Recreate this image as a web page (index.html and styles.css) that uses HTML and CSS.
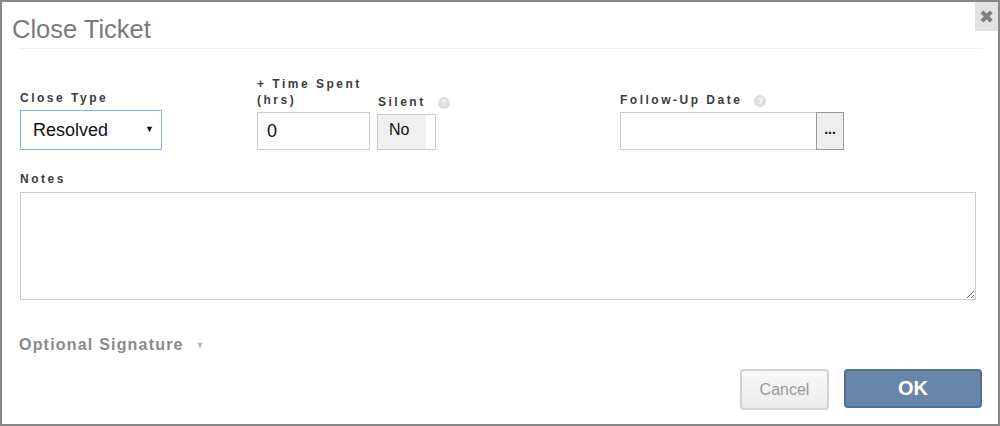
FILE: index.html
```html
<!DOCTYPE html>
<html lang="en">
<head>
    <meta charset="UTF-8">
    <meta name="viewport" content="width=device-width, initial-scale=1.0">
    <title>Close Ticket</title>
    <link rel="stylesheet" href="styles.css">
</head>
<body>

    <div class="dialog">
        <button type="button" class="dialog-close" title="Close">&#10006;</button>

        <h2 class="dialog-title">Close Ticket</h2>
        <div class="dialog-rule"></div>

        <form class="dialog-body" id="closeTicketForm">
            <div class="field-row">
                <div class="field field-type">
                    <label for="closeType">Close Type</label>
                    <div class="select-wrap">
                        <select id="closeType">
                            <option>Resolved</option>
                            <option>Duplicate</option>
                            <option>Cancelled</option>
                        </select>
                    </div>
                </div>

                <div class="field field-time">
                    <label for="timeSpent">+ Time Spent (hrs)</label>
                    <input type="text" id="timeSpent" value="0">
                </div>

                <div class="field field-silent">
                    <label>Silent <span class="help">?</span></label>
                    <div class="toggle">
                        <span class="toggle-value">No</span>
                    </div>
                </div>

                <div class="field field-date">
                    <label for="followUp">Follow-Up Date <span class="help">?</span></label>
                    <div class="date-group">
                        <input type="text" id="followUp">
                        <button type="button" class="date-pick">...</button>
                    </div>
                </div>
            </div>

            <div class="field field-notes">
                <label for="notes">Notes</label>
                <textarea id="notes"></textarea>
            </div>

            <div class="signature-toggle">Optional Signature <span class="caret">&#9660;</span></div>
        </form>

        <div class="dialog-footer">
            <button type="button" class="btn btn-cancel">Cancel</button>
            <button type="button" class="btn btn-ok">OK</button>
        </div>
    </div>

</body>
</html>
```

FILE: styles.css
```css
html, body {
    margin: 0;
    padding: 0;
}

body {
    font-family: "Liberation Sans", Arial, sans-serif;
    background-color: white;
}

.dialog {
    position: relative;
    height: 100vh;
    box-sizing: border-box;
    border: 2px solid #888;
    background-color: white;
}

.dialog-close {
    position: absolute;
    top: 0;
    right: 0;
    width: 23px;
    height: 29px;
    padding: 0;
    border: none;
    background-color: #e2e2e2;
    color: #808080;
    font-family: "DejaVu Sans", sans-serif;
    font-size: 18px;
    font-weight: bold;
    line-height: 27px;
    text-align: center;
    cursor: pointer;
}

.dialog-title {
    margin: 0;
    padding: 13px 0 0 10px;
    font-size: 25.5px;
    font-weight: normal;
    line-height: 28px;
    color: #7a7a7a;
}

.dialog-rule {
    height: 1px;
    margin: 5px 15px 0 17px;
    background-color: #f0f0f0;
}

.dialog-body {
    padding: 0 22px 0 18px;
}

.field-row {
    display: flex;
    align-items: flex-end;
    margin-top: 27px;
}

.field label {
    display: block;
    margin-bottom: 4px;
    font-size: 12px;
    font-weight: bold;
    letter-spacing: 2.5px;
    line-height: 16px;
    color: #3c3c3c;
}

.field input,
.field select,
.field textarea {
    font-family: "Liberation Sans", Arial, sans-serif;
    box-sizing: border-box;
    outline: none;
}

.field-type {
    width: 237px;
}

.field-time {
    width: 120px;
}

.field-silent {
    width: 243px;
}

.field-silent label {
    padding-left: 1px;
}

.select-wrap {
    position: relative;
    width: 142px;
}

.select-wrap select {
    appearance: none;
    -webkit-appearance: none;
    display: block;
    width: 142px;
    height: 40px;
    padding: 0 0 0 12px;
    border: 1px solid #86aee6;
    border-radius: 0;
    background-color: white;
    font-size: 18px;
    color: #111;
}

.select-wrap::after {
    content: "\25BC";
    position: absolute;
    right: 8px;
    top: 14px;
    font-size: 9px;
    color: #111;
    pointer-events: none;
}

.field-time input {
    display: block;
    width: 113px;
    height: 38px;
    padding: 0 9px;
    border: 1px solid #ccc;
    font-size: 18px;
    color: #111;
}

.help {
    display: inline-block;
    width: 12px;
    height: 12px;
    margin-left: 6px;
    border-radius: 50%;
    background-color: #ddd;
    color: white;
    font-size: 9px;
    letter-spacing: 0;
    line-height: 12px;
    text-align: center;
    vertical-align: 0;
}

.toggle {
    display: flex;
    width: 59px;
    height: 36px;
    box-sizing: border-box;
    border: 1px solid #ccc;
    background-color: white;
}

.toggle-value {
    width: 48px;
    padding-left: 11px;
    box-sizing: border-box;
    background-color: #f0f0f0;
    font-size: 16px;
    line-height: 30px;
    color: #111;
}

.date-group {
    display: flex;
}

.date-group input {
    width: 196px;
    height: 38px;
    border: 1px solid #ccc;
    border-right: none;
    padding: 0 8px;
    font-size: 16px;
}

.date-pick {
    width: 28px;
    height: 38px;
    padding: 0 0 4px;
    border: 1px solid #999;
    background-color: #eee;
    font-family: "Liberation Sans", Arial, sans-serif;
    font-size: 14px;
    font-weight: bold;
    color: #111;
    cursor: pointer;
}

.field-notes {
    margin-top: 21px;
}

.field-notes label {
    margin-bottom: 5px;
}

.field-notes textarea {
    display: block;
    width: 100%;
    height: 108px;
    border: 1px solid #ccc;
    font-size: 14px;
    resize: vertical;
}

.signature-toggle {
    margin-top: 35px;
    margin-left: -1px;
    font-size: 16px;
    font-weight: bold;
    letter-spacing: 1.2px;
    line-height: 20px;
    color: #8a8a8a;
    cursor: pointer;
}

.caret {
    margin-left: 6px;
    font-size: 9px;
    color: #bbb;
    vertical-align: 2px;
}

.dialog-footer {
    display: flex;
    justify-content: flex-end;
    align-items: flex-start;
    gap: 15px;
    margin-top: 14px;
    padding-right: 16px;
}

.btn {
    font-family: "Liberation Sans", Arial, sans-serif;
    border-radius: 4px;
    cursor: pointer;
}

.btn-cancel {
    width: 89px;
    height: 41px;
    border: 2px solid #d2d2d2;
    background: linear-gradient(#f8f8f8, #ececec);
    font-size: 16px;
    color: #999;
}

.btn-ok {
    width: 138px;
    height: 39px;
    border: 2px solid #50709c;
    background-color: #6886a8;
    font-size: 20px;
    font-weight: bold;
    color: white;
}

.btn-ok:hover {
    background-color: #5a789a;
}
```
